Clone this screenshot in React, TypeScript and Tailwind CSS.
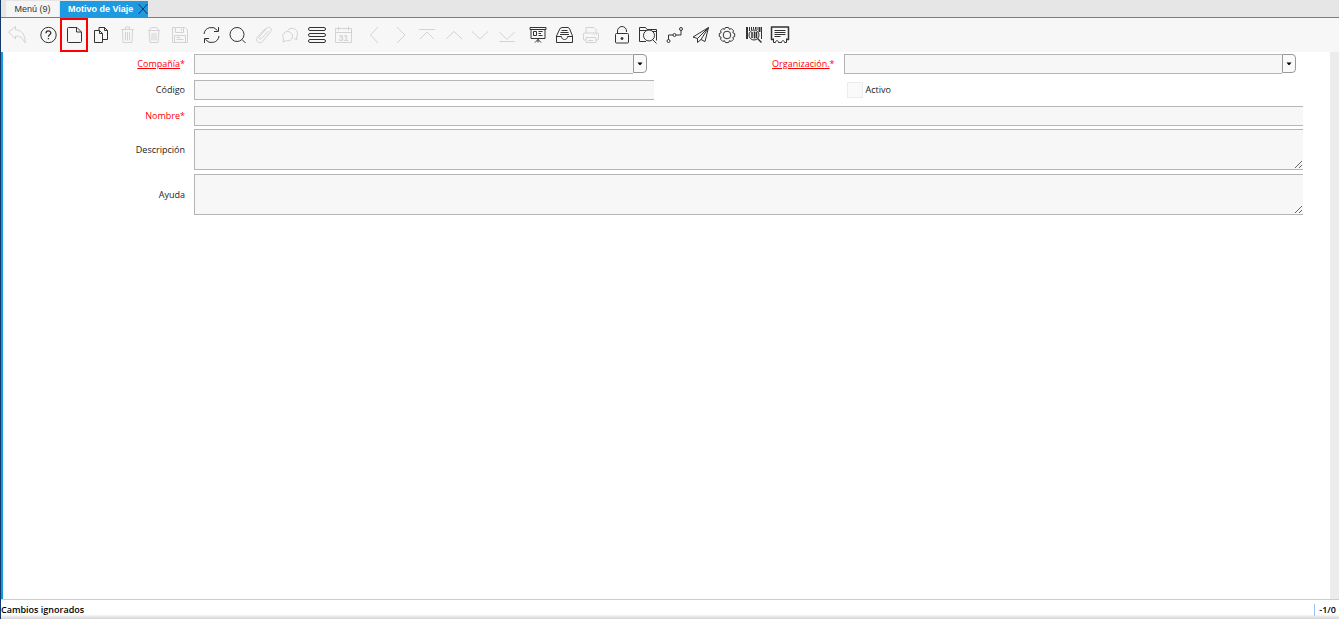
import React from "react";

type ToolItem = {
  name: string;
  icon: React.ReactNode;
  disabled?: boolean;
  marked?: boolean;
};

type ToolGroup = {
  width: string;
  items: ToolItem[];
};

const trash = (
  <>
    <path d="M4 4.5h13M8.5 4.5v-2.5h4v2.5M5.5 4.5l.5 13h9l.5-13" />
    <path d="M8.5 7v8.5M10.5 7v8.5M12.5 7v8.5" />
  </>
);

const trashOpen = (
  <>
    <path d="M4.5 5.5h11M5 5.5c0-2 2-2 3-3h4c1 1 3 1 3 3M5 5.5l1 12h8l1-12" />
    <path d="M8 8v7.5M10 8v7.5M12 8v7.5" />
  </>
);

const groups: ToolGroup[] = [
  {
    width: "w-[26px]",
    items: [
      {
        name: "Deshacer",
        disabled: true,
        icon: (
          <path d="M1.5 7L8.5 1.5v3.3c6 .2 10 4.7 9.5 13-2.5-5-5-6.8-9.5-6.8v3z" />
        ),
      },
    ],
  },
  {
    width: "w-[158px]",
    items: [
      {
        name: "Ayuda",
        icon: (
          <>
            <circle cx="10.5" cy="10" r="7.7" />
            <path
              d="M8 8.2c0-3 4.8-3 4.8-.2 0 1.8-2.4 1.7-2.4 3.8M10.4 13v1.3"
              strokeWidth="1.3"
            />
          </>
        ),
      },
      {
        name: "Nuevo",
        marked: true,
        icon: (
          <path d="M4.5 2.5h8.5l4.5 4.5v9.5a1 1 0 0 1-1 1h-12a1 1 0 0 1-1-1v-13a1 1 0 0 1 1-1zM12.5 2.5v4.5h4.5" />
        ),
      },
      {
        name: "Copiar",
        icon: (
          <>
            <path d="M3.5 5.5h5l3 3v9h-8zM8.5 5.5v3h3" />
            <path d="M8 5.5v-3h5.5l3 3v9h-5M13.5 2.5v3h3" />
          </>
        ),
      },
      { name: "Borrar", disabled: true, icon: trash },
      { name: "Borrar selección", disabled: true, icon: trashOpen },
      {
        name: "Guardar",
        disabled: true,
        icon: (
          <>
            <path d="M2.5 2.5h12.5l2.5 2.5v12.5h-15zM5.5 2.5v5h8v-5M11.5 3.5v2.5M4.5 17.5v-7h11v7" />
            <path d="M6.5 12.5h4M6.5 14.5h7" />
          </>
        ),
      },
    ],
  },
  {
    width: "w-[158px]",
    items: [
      {
        name: "Refrescar",
        icon: (
          <>
            <path d="M3 9a7.5 7.5 0 0 1 13.5-3.5M18 11a7.5 7.5 0 0 1-13.5 3.5" />
            <path d="M17.5 2v4.5h-4.5M3.5 18v-4.5h4.5" />
          </>
        ),
      },
      {
        name: "Buscar",
        icon: (
          <>
            <circle cx="10" cy="9.5" r="7" />
            <path d="M15 14.5l3.5 3.5" />
          </>
        ),
      },
      {
        name: "Adjunto",
        disabled: true,
        icon: (
          <path d="M14.5 6L7.5 13.5c-1.5 1.5-3.3-.3-2-1.8L12.5 3.3c2.8-2.7 6.5.5 4 3.5L8.5 16.5c-3.5 3.5-8-1-5-4.5l8-8.5" />
        ),
      },
      {
        name: "Chat",
        disabled: true,
        icon: (
          <>
            <path d="M7.5 5.5a5.5 5.5 0 1 1 9 6.5l.5 3-3-1.5" />
            <path d="M8 6.5a4.7 4.7 0 1 1-1.5 9.2L3 17l.7-3a4.7 4.7 0 0 1 4.3-7.5z" />
          </>
        ),
      },
      {
        name: "Vista de lista",
        icon: (
          <>
            <rect x="1.5" y="2.5" width="17" height="3" rx="1.5" />
            <rect x="1.5" y="8.5" width="17" height="3" rx="1.5" />
            <rect x="1.5" y="14.5" width="17" height="3" rx="1.5" />
          </>
        ),
      },
      {
        name: "Calendario",
        disabled: true,
        icon: (
          <>
            <rect x="2.5" y="3.5" width="16" height="14" />
            <path d="M2.5 7.5h16M5.5 1.5v4M15.5 1.5v4" />
            <text
              x="10.5"
              y="16"
              textAnchor="middle"
              fontSize="9"
              fontWeight="bold"
              fill="currentColor"
              stroke="none"
            >
              31
            </text>
          </>
        ),
      },
    ],
  },
  {
    width: "w-[159px]",
    items: [
      {
        name: "Pestaña anterior",
        disabled: true,
        icon: <path d="M14 2L6.5 10l7.5 8" />,
      },
      {
        name: "Pestaña siguiente",
        disabled: true,
        icon: <path d="M6 2l8 8-8 8" />,
      },
      {
        name: "Primer registro",
        disabled: true,
        icon: <path d="M2 4.5h16M3 14L10 7l7 7" />,
      },
      {
        name: "Registro anterior",
        disabled: true,
        icon: <path d="M2 14l8-7.5 8 7.5" />,
      },
      {
        name: "Registro siguiente",
        disabled: true,
        icon: <path d="M2 6.5l8 7.5 8-7.5" />,
      },
      {
        name: "Último registro",
        disabled: true,
        icon: <path d="M2.5 7l7.5 7.5L17.5 7M2.5 16.5h15" />,
      },
    ],
  },
  {
    width: "w-[79px]",
    items: [
      {
        name: "Informe",
        icon: (
          <>
            <path d="M2 2.5h16v2h-16zM3 4.5v9h14v-9M10 13.5v4M10 14.5l-3 3M10 14.5l3 3" />
            <path d="M5.5 6.5h3v4h-3zM10.5 6.5h4M10.5 8.5h2.5M10.5 10.5h4" />
          </>
        ),
      },
      {
        name: "Archivo",
        icon: (
          <>
            <path d="M1.5 11l3.5-7.5 2-1h6l1.5 1L17.5 11v6.5h-16zM1.5 11.5h5c0 4 6 4 6 0h5" />
            <path d="M6.5 5.5h6M5.5 7.5h8M5 9.5h9" />
          </>
        ),
      },
      {
        name: "Imprimir",
        disabled: true,
        icon: (
          <>
            <path d="M5 8V2.5h8l2 2V8M5 15H3.5a1 1 0 0 1-1-1V9a1 1 0 0 1 1-1h13a1 1 0 0 1 1 1v5a1 1 0 0 1-1 1H15" />
            <path d="M5 12.5h10v5h-10zM7 15.5h5M12.5 9.5h1M15 9.5h1" />
          </>
        ),
      },
    ],
  },
  {
    width: "w-[184px]",
    items: [
      {
        name: "Bloquear",
        icon: (
          <>
            <rect x="3.5" y="8.5" width="13" height="9.5" rx="1" />
            <path d="M5.5 8.5V6a4.5 4.5 0 0 1 9 0v1" />
            <circle cx="10" cy="13.5" r="1" fill="currentColor" />
          </>
        ),
      },
      {
        name: "Zoom",
        icon: (
          <>
            <path d="M8 16.5H1.5v-14h6l1.5 2h9.5v11M1.5 5.5h7M14 6.5h4" />
            <circle cx="11" cy="10.5" r="5.5" />
            <path d="M14.5 14.5l4 4" />
          </>
        ),
      },
      {
        name: "Flujo de trabajo",
        icon: (
          <>
            <circle cx="3.5" cy="16" r="1.5" />
            <circle cx="9.5" cy="10" r="1.5" />
            <circle cx="16" cy="4" r="1.5" />
            <path d="M3.5 14.5V10h4.5M11 10h5V5.5" />
          </>
        ),
      },
      {
        name: "Solicitud",
        icon: (
          <path d="M17.5 2.5L2 12l4.5 1.5L17.5 2.5L14 16.5l-4-2L17.5 2.5M6.5 13.5v4l3.5-3" />
        ),
      },
      {
        name: "Proceso",
        icon: (
          <>
            <path d="M8.4 2.5h3.2l.8 1.8 1.9-.7 2.2 2.2-.7 1.9 1.9.8v3l-1.9.8.7 1.9-2.2 2.2-1.9-.7-.8 1.9H8.4l-.8-1.9-1.9.7-2.2-2.2.7-1.9-1.9-.8v-3l1.9-.8-.7-1.9 2.2-2.2 1.9.7z" />
            <circle cx="10" cy="10" r="3.8" />
          </>
        ),
      },
      {
        name: "Información de producto",
        icon: (
          <>
            <path d="M3 2v12M15.5 2v5" strokeWidth="2" />
            <path d="M5.5 2v4M7.5 2v3M9.5 2v2.5M11.5 2v2.5M13 2v3M17.5 2v12" />
            <circle cx="10" cy="10" r="5" />
            <path d="M8 7v6M10.5 6.5v7M12.5 7v6" strokeWidth="1.5" />
            <path d="M13.5 13.5l4 4" strokeWidth="1.5" />
          </>
        ),
      },
      {
        name: "Recibo",
        icon: (
          <>
            <path d="M3.5 14.5h-2v-12.5h17v12.5h-2" strokeWidth="1.5" />
            <path d="M3.5 13.5v4h2c0-2.5 3-2.5 3 0h3c0-2.5 3-2.5 3 0h2v-4" />
            <path d="M4.5 5.5h11M4.5 7.5h11M4.5 9.5h11M4.5 11.5h6" />
          </>
        ),
      },
    ],
  },
];

const fieldClass =
  "block w-full border border-r-0 border-[#b5b5b5] bg-[#f7f7f7] px-1 text-[9px] outline-none";

const ToolButton: React.FC<{ item: ToolItem }> = ({ item }) => (
  <button
    type="button"
    aria-label={item.name}
    disabled={item.disabled}
    className={`relative flex h-[34px] w-[26px] items-center justify-center ${
      item.disabled ? "text-[#d3d3d3]" : "text-[#333333]"
    }`}
  >
    <svg
      viewBox="0 0 20 20"
      className="size-5"
      fill="none"
      stroke="currentColor"
      strokeLinejoin="round"
    >
      {item.icon}
    </svg>
    {item.marked && (
      <span className="absolute -inset-x-px inset-y-0 border-2 border-[#ff0000]" />
    )}
  </button>
);

type LabelProps = {
  htmlFor: string;
  text: string;
  required?: boolean;
  linked?: boolean;
};

const FieldLabel: React.FC<LabelProps> = ({
  htmlFor,
  text,
  required,
  linked,
}) => (
  <label
    htmlFor={htmlFor}
    className={`self-center pr-[9px] text-right leading-3 ${
      required ? "text-[#ff0000]" : "text-[#222222]"
    }`}
  >
    <span className={linked ? "underline underline-offset-1" : ""}>{text}</span>
    {required && <span>*</span>}
  </label>
);

const ComboField: React.FC<{ id: string; label: string }> = ({ id, label }) => (
  <div className="mr-[7px] flex h-5">
    <input id={id} type="text" className={`${fieldClass} min-w-0 flex-1`} />
    <button
      type="button"
      aria-label={`Abrir ${label}`}
      className="flex h-[19px] w-3.5 items-center justify-center rounded-r-sm border border-[#999999] bg-[#fafafa]"
    >
      <svg viewBox="0 0 6 4" className="h-1 w-1.5">
        <path d="M.5 .5h5L3.5 3h-1z" fill="#000000" />
      </svg>
    </button>
  </div>
);

const App: React.FC = () => {
  return (
    <div className="flex h-screen flex-col border-l border-[#12396b] bg-white font-['Open_Sans',sans-serif] text-[9px]">
      <nav className="flex h-[18px] shrink-0 border-b border-[#1f9ae0] bg-[#e6e6e6] pl-[5px] font-['Liberation_Sans',sans-serif]">
        <button
          type="button"
          className="mt-px w-[53px] bg-[#f5f5f5] pt-px text-[#333333]"
        >
          Menú (9)
        </button>
        <div className="mt-px ml-px flex w-[88px] items-center justify-between bg-[#1f9ae0] pl-2 text-white">
          <button type="button" className="pt-px font-bold whitespace-nowrap">
            Motivo de Viaje
          </button>
          <button type="button" aria-label="Cerrar">
            <svg
              viewBox="0 0 10 10"
              className="size-2.5"
              stroke="#123a5a"
              fill="none"
            >
              <path d="M.5 0l9 10M9.5 0l-9 10" />
            </svg>
          </button>
        </div>
      </nav>

      <div className="flex h-[34px] shrink-0 gap-[5px] bg-[#f7f7f7] pl-[3px] font-['Liberation_Sans',sans-serif]">
        {groups.map((group, index) => (
          <div
            key={index}
            className={`flex shrink-0 justify-between ${group.width}`}
          >
            {group.items.map((item) => (
              <ToolButton key={item.name} item={item} />
            ))}
          </div>
        ))}
      </div>

      <main className="flex min-h-0 flex-1 border-l-2 border-[#0f9bdc]">
        <form className="min-w-0 flex-1 pt-0.5 pr-[27px]">
          <div className="grid grid-cols-[191px_1fr_190px_1fr] gap-y-1.5">
            <FieldLabel htmlFor="compania" text="Compañía" required linked />
            <ComboField id="compania" label="Compañía" />
            <FieldLabel
              htmlFor="organizacion"
              text="Organización."
              required
              linked
            />
            <ComboField id="organizacion" label="Organización" />

            <FieldLabel htmlFor="codigo" text="Código" />
            <input id="codigo" type="text" className={`${fieldClass} h-5`} />
            <div className="col-start-4 flex items-center gap-[3px] pl-[3px]">
              <input
                id="activo"
                type="checkbox"
                className="size-4 appearance-none border border-[#ececec] bg-[#fafafa]"
              />
              <label htmlFor="activo" className="leading-3 text-[#222222]">
                Activo
              </label>
            </div>

            <FieldLabel htmlFor="nombre" text="Nombre" required />
            <input
              id="nombre"
              type="text"
              className={`${fieldClass} col-span-3 h-5`}
            />
          </div>
          <div className="mt-[3px] grid grid-cols-[191px_1fr] gap-y-1">
            <FieldLabel htmlFor="descripcion" text="Descripción" />
            <textarea
              id="descripcion"
              className={`${fieldClass} h-[41px] resize`}
            />
            <FieldLabel htmlFor="ayuda" text="Ayuda" />
            <textarea id="ayuda" className={`${fieldClass} h-[41px] resize`} />
          </div>
        </form>
        <div className="w-[9px] shrink-0 bg-[#ececec]" />
      </main>

      <footer className="flex h-5 shrink-0 items-center justify-between border-t border-[#cccccc] bg-linear-to-b from-white from-75% to-[#d4d4d4] font-semibold text-black">
        <span>Cambios ignorados</span>
        <span className="border-l border-[#9dbdf5] pr-[3px] pl-1 leading-3">
          -1/0
        </span>
      </footer>
    </div>
  );
};

export default App;
